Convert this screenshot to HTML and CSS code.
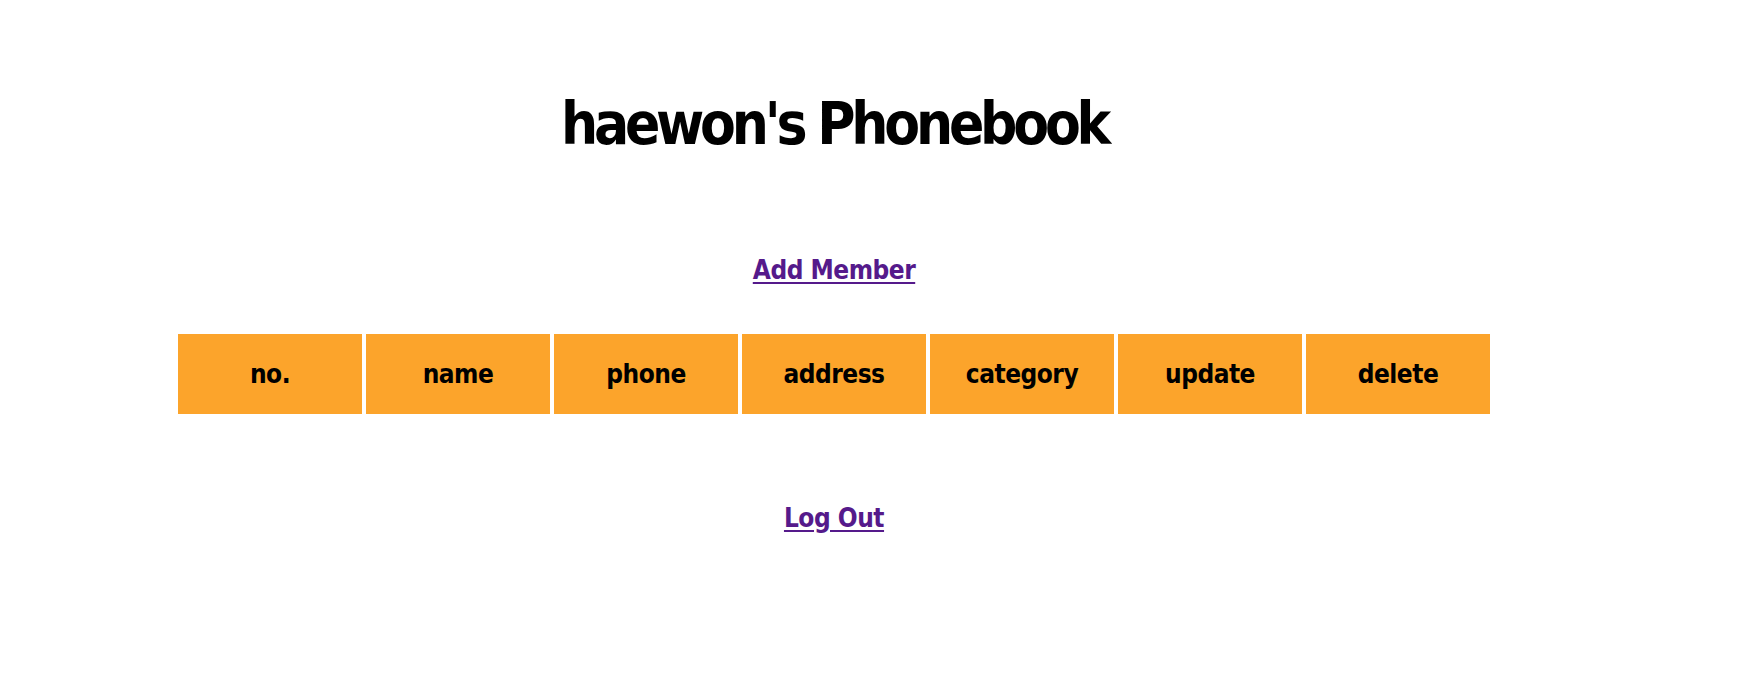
FILE: index.html
```html
<!DOCTYPE html>
<html>
<head>
<meta charset="utf-8">
<title>haewon's Phonebook</title>
<link rel="stylesheet" href="styles.css">
</head>
<body>
<div class="page">
  <h1 class="title">haewon's Phonebook</h1>
  <p class="link-row"><a class="link" href="#">Add Member</a></p>
  <table class="book">
    <thead>
      <tr>
        <th>no.</th>
        <th>name</th>
        <th>phone</th>
        <th>address</th>
        <th>category</th>
        <th>update</th>
        <th>delete</th>
      </tr>
    </thead>
  </table>
  <p class="link-row logout"><a class="link" href="#">Log Out</a></p>
</div>
</body>
</html>
```

FILE: styles.css
```css
html, body {
  margin: 0;
  padding: 0;
  background: #ffffff;
}
.page {
  width: 1668px;
  display: flex;
  flex-direction: column;
  align-items: center;
  font-family: "DejaVu Sans Condensed", "DejaVu Sans", sans-serif;
  font-stretch: condensed;
  font-weight: bold;
  color: #000;
}
.title {
  margin: 84px 0 0 0;
  font-size: 58px;
  line-height: 80px;
  letter-spacing: -4.2px;
}
.link-row {
  margin: 88px 0 0 0;
  font-size: 26px;
  line-height: 36px;
  letter-spacing: -0.5px;
}
.link {
  color: #551a8b;
  text-decoration: underline;
  text-underline-offset: 3px;
}
.book {
  margin-top: 42px;
  width: 1320px;
  border-collapse: separate;
  border-spacing: 4px;
  table-layout: fixed;
}
.book th {
  background: #fca42b;
  height: 80px;
  padding: 0;
  font-size: 26px;
  font-weight: bold;
  letter-spacing: -0.5px;
  text-align: center;
  vertical-align: middle;
}
.logout {
  margin-top: 82px;
}
```
